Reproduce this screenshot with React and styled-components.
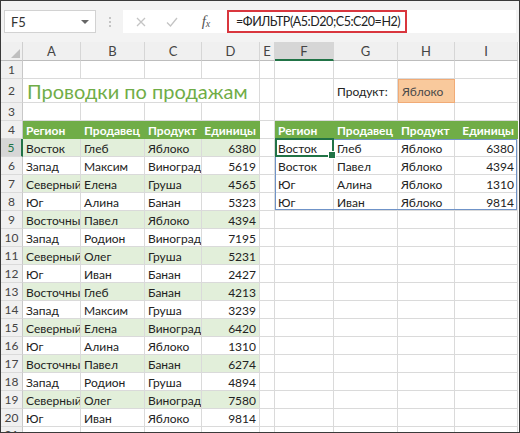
import React from "react";
import styled, { createGlobalStyle } from "styled-components";

const GlobalStyle = createGlobalStyle`
  html, body {
    margin: 0;
    padding: 0;
    background: #fff;
  }
  * {
    box-sizing: border-box;
  }
`;

const Frame = styled.div`
  width: 520px;
  height: 433px;
  border: 1px solid #3a3a3a;
  overflow: hidden;
  background: #f3f3f3;
  font-family: Lato, "Open Sans", "Noto Sans", sans-serif;
  color: #222;
`;

const FormulaBar = styled.div`
  height: 41px;
  background: #f3f3f3;
  display: flex;
  align-items: center;
  padding: 0 3px;
`;

const NameBox = styled.div`
  width: 92px;
  height: 23px;
  background: #fff;
  border: 1px solid #d2d2d2;
  display: flex;
  align-items: center;
  justify-content: space-between;
  padding: 0 6px 0 6px;
  font-size: 13px;
  color: #333;
`;

const Caret = styled.span`
  width: 0;
  height: 0;
  border-left: 4px solid transparent;
  border-right: 4px solid transparent;
  border-top: 4px solid #666;
`;

const Dots = styled.div`
  width: 27px;
  display: flex;
  flex-direction: column;
  align-items: center;
  gap: 2px;

  span {
    width: 2px;
    height: 2px;
    border-radius: 50%;
    background: #b4b4b4;
  }
`;

const FormulaArea = styled.div`
  flex: 1;
  height: 23px;
  background: #fff;
  display: flex;
  align-items: stretch;
`;

const BarButton = styled.div`
  width: ${(p) => p.$w}px;
  display: flex;
  align-items: center;
  justify-content: center;
`;

const Fx = styled.span`
  font-family: "Liberation Serif", serif;
  font-style: italic;
  font-size: 15px;
  color: #555;

  sub {
    font-size: 10px;
    vertical-align: -1px;
  }
`;

const FormulaInput = styled.div`
  width: 180px;
  border: 2px solid #d9363e;
  display: flex;
  align-items: center;
  padding-left: 7px;
  font-size: 12.5px;
  letter-spacing: -0.45px;
  color: #222;
  white-space: nowrap;
`;

const Sheet = styled.div`
  display: grid;
  grid-template-columns: 22px 58px 64px 57px 58px 15px 59px 64px 57px 63px;
  grid-template-rows: 19px 18px 24px 18px repeat(17, 18px);
  background: #fff;
  position: relative;
`;

const Corner = styled.div`
  background: #f0f0f0;
  border-right: 1px solid #cfcfcf;
  border-bottom: 1px solid #bdbdbd;
  position: relative;

  &::after {
    content: "";
    position: absolute;
    right: 2px;
    bottom: 2px;
    width: 0;
    height: 0;
    border-left: 9px solid transparent;
    border-bottom: 9px solid #bfbfbf;
  }
`;

const ColHead = styled.div`
  background: ${(p) => (p.$active ? "#d6d6d6" : "#f0f0f0")};
  border-right: 1px solid #d6d6d6;
  border-bottom: ${(p) => (p.$active ? "2px solid #217346" : "1px solid #bdbdbd")};
  display: flex;
  align-items: center;
  justify-content: center;
  font-size: 13px;
  color: #444;
`;

const RowHead = styled.div`
  background: ${(p) => (p.$active ? "#d6d6d6" : "#f0f0f0")};
  border-right: ${(p) => (p.$active ? "2px solid #217346" : "1px solid #c8c8c8")};
  border-bottom: 1px solid #dadada;
  display: flex;
  align-items: center;
  justify-content: center;
  font-size: 12px;
  color: ${(p) => (p.$active ? "#217346" : "#444")};
`;

const Cell = styled.div`
  background: ${(p) => p.$bg || "#fff"};
  border-right: 1px solid ${(p) => p.$line || "#dadada"};
  border-bottom: 1px solid ${(p) => p.$line || "#dadada"};
  display: flex;
  align-items: center;
  justify-content: ${(p) => (p.$right ? "flex-end" : "flex-start")};
  padding: 1px 3px 0;
  font-size: 12px;
  font-weight: ${(p) => (p.$bold ? 700 : 400)};
  color: ${(p) => p.$color || "#222"};
  white-space: nowrap;
  overflow: hidden;
`;

const Title = styled(Cell)`
  grid-column: 2 / span 4;
  font-size: 20px;
  color: #70ad47;
  padding-left: 4px;
`;

const InputCell = styled(Cell)`
  background: #f9c99c;
  border: 1px solid #f1ab76;
  color: #4a4a4a;
`;

const SpillOutline = styled.div`
  grid-column: 7 / 11;
  grid-row: 6 / 10;
  position: absolute;
  inset: 0 1px 1px 0;
  border: 1px solid #6f93c8;
  pointer-events: none;
`;

const Selection = styled.div`
  grid-column: 7 / 8;
  grid-row: 6 / 7;
  position: absolute;
  inset: -1px 0 0 0;
  border: 2px solid #217346;
  pointer-events: none;

  &::after {
    content: "";
    position: absolute;
    right: -4px;
    bottom: -4px;
    width: 6px;
    height: 6px;
    background: #217346;
    border: 1px solid #fff;
  }
`;

const LETTERS = ["A", "B", "C", "D", "E", "F", "G", "H", "I"];
const HEAD = ["Регион", "Продавец", "Продукт", "Единицы"];

const LEFT = [
  ["Восток", "Глеб", "Яблоко", 6380],
  ["Запад", "Максим", "Виноград", 5619],
  ["Северный", "Елена", "Груша", 4565],
  ["Юг", "Алина", "Банан", 5323],
  ["Восточный", "Павел", "Яблоко", 4394],
  ["Запад", "Родион", "Виноград", 7195],
  ["Северный", "Олег", "Груша", 5231],
  ["Юг", "Иван", "Банан", 2427],
  ["Восточный", "Глеб", "Банан", 4213],
  ["Запад", "Максим", "Груша", 3239],
  ["Северный", "Елена", "Виноград", 6420],
  ["Юг", "Алина", "Яблоко", 1310],
  ["Восточный", "Павел", "Банан", 6274],
  ["Запад", "Родион", "Груша", 4894],
  ["Северный", "Олег", "Виноград", 7580],
  ["Юг", "Иван", "Яблоко", 9814],
];

const RIGHT = [
  ["Восток", "Глеб", "Яблоко", 6380],
  ["Восток", "Павел", "Яблоко", 4394],
  ["Юг", "Алина", "Яблоко", 1310],
  ["Юг", "Иван", "Яблоко", 9814],
];

const GREEN = "#70ad47";
const BAND = "#e2efda";

const tableCells = (values, key, opts = {}) =>
  values.map((v, i) => (
    <Cell
      key={key + i}
      $right={i === 3}
      $bg={opts.bg}
      $bold={opts.bold}
      $color={opts.color}
      $line={opts.line}
    >
      {v}
    </Cell>
  ));

const emptyCells = (n, key) =>
  Array.from({ length: n }, (_, i) => <Cell key={key + i} />);

const App = () => {
  const rows = [];

  // row 1
  rows.push(<RowHead key="r1">1</RowHead>, ...emptyCells(9, "c1-"));

  // row 2
  rows.push(
    <RowHead key="r2">2</RowHead>,
    <Title key="title">Проводки по продажам</Title>,
    ...emptyCells(2, "c2-"),
    <Cell key="lbl">Продукт:</Cell>,
    <InputCell key="inp">Яблоко</InputCell>,
    <Cell key="c2i" />
  );

  // row 3
  rows.push(<RowHead key="r3">3</RowHead>, ...emptyCells(9, "c3-"));

  // row 4 headers
  rows.push(
    <RowHead key="r4">4</RowHead>,
    ...tableCells(HEAD, "hl", { bg: GREEN, bold: true, color: "#fff", line: GREEN }),
    <Cell key="h-e" />,
    ...tableCells(HEAD, "hr", { bg: GREEN, bold: true, color: "#fff", line: GREEN })
  );

  LEFT.forEach((vals, i) => {
    const n = i + 5;
    rows.push(
      <RowHead key={"r" + n} $active={n === 5}>
        {n}
      </RowHead>,
      ...tableCells(vals, "l" + n, { bg: i % 2 === 0 ? BAND : "#fff" }),
      <Cell key={"e" + n} />,
      ...(RIGHT[i] ? tableCells(RIGHT[i], "rt" + n) : emptyCells(4, "x" + n))
    );
  });

  rows.push(<RowHead key="r21">21</RowHead>, ...emptyCells(9, "c21-"));

  return (
    <>
      <GlobalStyle />
      <Frame>
        <FormulaBar>
          <NameBox>
            F5
            <Caret />
          </NameBox>
          <Dots>
            <span />
            <span />
            <span />
          </Dots>
          <FormulaArea>
            <BarButton $w={36}>
              <svg width="10" height="10" viewBox="0 0 10 10">
                <path d="M1 1 L9 9 M9 1 L1 9" stroke="#c4c4c4" strokeWidth="1.3" fill="none" />
              </svg>
            </BarButton>
            <BarButton $w={26}>
              <svg width="12" height="10" viewBox="0 0 12 10">
                <path d="M1 5.5 L4.5 9 L11 1" stroke="#c4c4c4" strokeWidth="1.3" fill="none" />
              </svg>
            </BarButton>
            <BarButton $w={42}>
              <Fx>
                f<sub>x</sub>
              </Fx>
            </BarButton>
            <FormulaInput>=ФИЛЬТР(A5:D20;C5:C20=H2)</FormulaInput>
          </FormulaArea>
        </FormulaBar>
        <Sheet>
          <Corner />
          {LETTERS.map((l) => (
            <ColHead key={l} $active={l === "F"}>
              {l}
            </ColHead>
          ))}
          {rows}
          <SpillOutline />
          <Selection />
        </Sheet>
      </Frame>
    </>
  );
};

export default App;
